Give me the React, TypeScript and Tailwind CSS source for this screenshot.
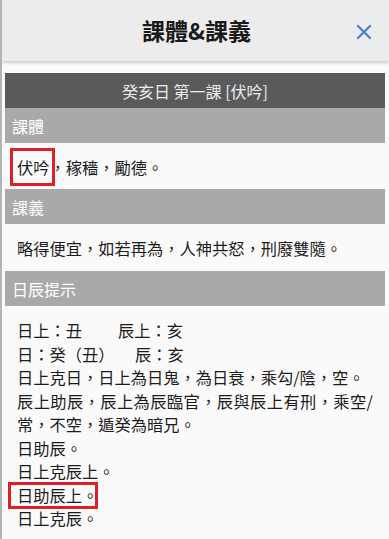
import React from "react";

const font = { fontFamily: '"Noto Sans CJK TC", "Noto Sans CJK SC", Roboto, sans-serif' };

function Bar({ children }: { children: React.ReactNode }) {
  return (
    <div className="h-[35px] bg-[#a9a9a9] text-white text-[16px] flex items-center pl-[7px]">{children}</div>
  );
}

export default function App() {
  return (
    <div style={font} className="w-[389px] h-[539px] overflow-hidden bg-[#fafafa] border-l-2 border-[#b4b4b4] text-[#1c1c1c]">
      <div className="h-[61px] bg-[#ececec] grid grid-cols-[1fr_auto_1fr] items-center shadow-[0_2px_3px_rgba(0,0,0,0.18)] relative z-10">
        <div />
        <div className="text-[23px] font-bold text-[#1a1a1a] pl-[2px]">課體&amp;課義</div>
        <div className="justify-self-end pr-[17px] pt-[2px]">
          <svg width="16" height="16" viewBox="0 0 16 16">
            <path d="M2 2 L14 14 M14 2 L2 14" stroke="#3a84cc" strokeWidth="2.2" strokeLinecap="round" />
          </svg>
        </div>
      </div>
      <div className="mt-[12px] ml-[3px] mr-[4px]">
        <div className="h-[35px] bg-[#5a5a5a] text-[#ececec] text-[16px] flex items-center justify-center">
          癸亥日 第一課 [伏吟]
        </div>
        <Bar>課體</Bar>
        <div className="pl-[12px] pr-[12px] pt-[12px] pb-[10px] text-[16.25px] leading-[24px]">
          <span className="relative">
            伏吟
            <span className="absolute left-[-7px] right-[-5px] top-[-7px] bottom-[-7px] border-[3px] border-[#dc2028]" />
          </span>
          ，稼穡，勵德。
        </div>
        <Bar>課義</Bar>
        <div className="pl-[12px] pr-[12px] pt-[12px] pb-[11px] text-[16.25px] leading-[24px]">
          略得便宜，如若再為，人神共怒，刑廢雙隨。
        </div>
        <Bar>日辰提示</Bar>
        <div className="pl-[12px] pr-[12px] pt-[13px] text-[16.25px] leading-[23.5px] text-justify">
          <div className="whitespace-nowrap">
            <span className="inline-block w-[101px]">日上：丑</span>辰上：亥
          </div>
          <div className="whitespace-nowrap">
            <span className="inline-block w-[118px]">日：癸（丑）</span>辰：亥
          </div>
          <div>日上克日，日上為日鬼，為日衰，乘勾/陰，空。</div>
          <div>辰上助辰，辰上為辰臨官，辰與辰上有刑，乘空/常，不空，遁癸為暗兄。</div>
          <div>日助辰。</div>
          <div>日上克辰上。</div>
          <div>
            <span className="relative">
              日助辰上。
              <span className="absolute left-[-9px] right-[0px] top-[-1px] bottom-[-2px] border-[3px] border-[#dc2028]" />
            </span>
          </div>
          <div>日上克辰。</div>
        </div>
      </div>
    </div>
  );
}
